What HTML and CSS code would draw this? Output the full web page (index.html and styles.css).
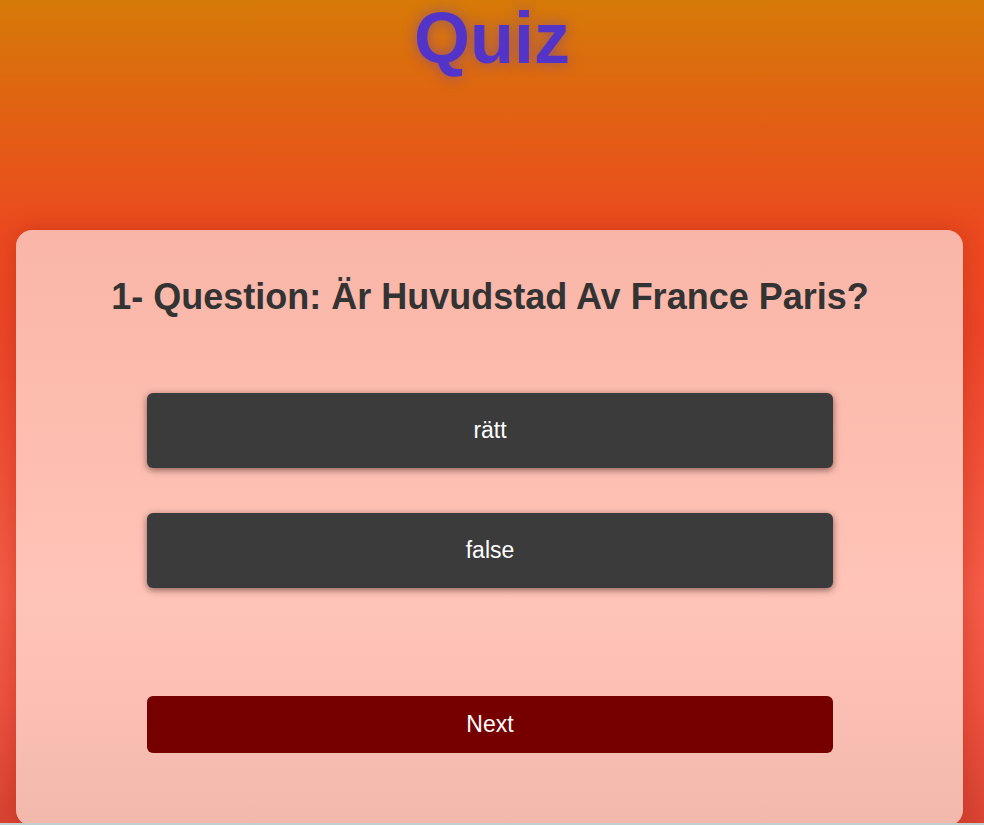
FILE: index.html
```html
<!DOCTYPE html>
<html lang="sv">
<head>
<meta charset="utf-8">
<title>Quiz</title>
<link rel="stylesheet" href="styles.css">
</head>
<body>
  <h1 class="title">Quiz</h1>
  <main class="card">
    <h2 class="question">1- Question: Är Huvudstad Av France Paris?</h2>
    <div class="answers">
      <button class="answer">rätt</button>
      <button class="answer">false</button>
    </div>
    <button class="next">Next</button>
  </main>
  <div class="bottom-edge"></div>
</body>
</html>
```

FILE: styles.css
```css
html, body {
  margin: 0;
  padding: 0;
}

body {
  min-height: 825px;
  font-family: "Liberation Sans", Arial, sans-serif;
  background: linear-gradient(180deg, #d67a08 0%, #e25f14 15%, #ec4a1f 28%, #ec4628 40%, #f55c48 72%, #ee5240 85%, #d74332 100%);
  overflow: hidden;
}

.title {
  margin: 0 0 154px;
  text-align: center;
  font-size: 72px;
  font-weight: 700;
  line-height: 76px;
  color: #5334c8;
  text-shadow: 0 0 14px rgba(90, 60, 190, 0.55);
}

.card {
  margin: 0 21px 0 16px;
  padding: 46px 130px 73px 131px;
  border-radius: 16px;
  background: linear-gradient(180deg, #f9b6a8 0%, #fcbcae 30%, #ffc4b8 62%, #fabfb2 80%, #f2b8ac 100%);
  box-shadow: 0 0 22px rgba(150, 30, 10, 0.35);
  display: flex;
  flex-direction: column;
}

.question {
  margin: 0 -100px 75px;
  text-align: center;
  font-size: 36px;
  font-weight: 700;
  line-height: normal;
  color: #333333;
}

.answers {
  display: flex;
  flex-direction: column;
  gap: 45px;
  margin-bottom: 108px;
}

.answer,
.next {
  display: flex;
  align-items: center;
  justify-content: center;
  width: 100%;
  border: none;
  border-radius: 6px;
  color: #ffffff;
  font-family: "Liberation Sans", Arial, sans-serif;
  font-size: 23px;
  padding: 0;
  cursor: pointer;
}

.answer {
  height: 75px;
  background: #3b3b3b;
  box-shadow: 0 2px 7px rgba(40, 10, 10, 0.55);
}

.next {
  height: 57px;
  background: #760000;
}

.bottom-edge {
  position: fixed;
  left: 0;
  right: 0;
  bottom: 0;
  height: 2px;
  background: #c4cccc;
}
```
